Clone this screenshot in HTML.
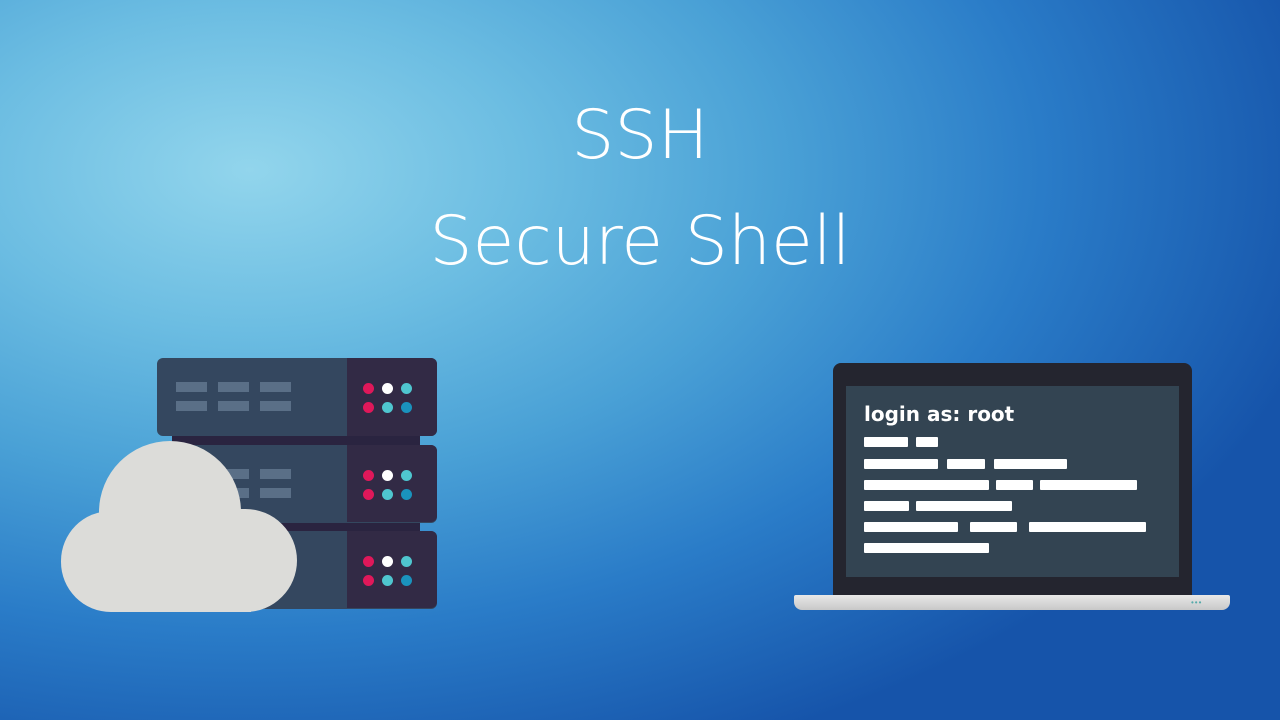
<!DOCTYPE html>
<html><head><style>
body{margin:0;width:1280px;height:720px;overflow:hidden;position:relative;font-family:"Liberation Sans",sans-serif;
background:radial-gradient(ellipse 1100px 640px at 250px 170px,#92d5ec 0%,#6cbde2 25%,#4aa1d6 48%,#2a7cc8 72%,#1654aa 100%);}
.abs{position:absolute}
.t{position:absolute;left:0;width:1280px;text-align:center;color:#fff;font-family:"DejaVu Sans",sans-serif;font-weight:200}
.u{position:absolute;left:157px;width:280px;height:78px;border-radius:6px;background:#34475f;overflow:hidden}
.g{position:absolute;width:31px;height:10px;background:#5a6f87}
.d{position:absolute;width:11px;height:11px;border-radius:50%}
.b{position:absolute;height:10px;background:#fff;border-radius:1px}
</style></head><body>
<div class="t" style="top:96px;font-size:68px">SSH</div>
<div class="t" style="top:202px;font-size:68px">Secure Shell</div>

<div class="abs" style="left:172px;top:430px;width:248px;height:110px;background:#2a2440"></div>
<div class="u" style="top:358px"></div>
<div class="u" style="top:445px"></div>
<div class="u" style="top:531px"></div>

<div class="abs" id="cloud" style="left:61px;top:441px;width:236px;height:171px">
<div class="abs" style="left:38px;top:0;width:142px;height:142px;border-radius:50%;background:#dcdcd9"></div>
<div class="abs" style="left:0;top:70px;width:110px;height:101px;border-radius:50px;background:#dcdcd9"></div>
<div class="abs" style="left:120px;top:68px;width:116px;height:103px;border-radius:52px;background:#dcdcd9"></div>
<div class="abs" style="left:50px;top:100px;width:140px;height:71px;background:#dcdcd9"></div>
</div>

<div class="abs" style="left:833px;top:363px;width:359px;height:234px;background:#24252f;border-radius:8px 8px 0 0"></div>
<div class="abs" style="left:846px;top:386px;width:333px;height:191px;background:#334452"></div>
<div class="abs" style="left:794px;top:595px;width:436px;height:15px;background:linear-gradient(#e8e8e8,#c8c8c8);border-radius:2px 2px 8px 8px"></div>
<div class="abs" style="left:1191px;top:598px;color:#5aa;font-size:8px;letter-spacing:1px">•••</div>
<div class="abs" style="left:864px;top:402px;color:#fff;font-family:'DejaVu Sans',sans-serif;font-weight:bold;font-size:20px">login as: root</div>
<div class="b" style="left:864px;top:437px;width:44px"></div><div class="b" style="left:916px;top:437px;width:22px"></div>
<div class="b" style="left:864px;top:459px;width:74px"></div><div class="b" style="left:947px;top:459px;width:38px"></div><div class="b" style="left:994px;top:459px;width:73px"></div>
<div class="b" style="left:864px;top:480px;width:125px"></div><div class="b" style="left:996px;top:480px;width:37px"></div><div class="b" style="left:1040px;top:480px;width:97px"></div>
<div class="b" style="left:864px;top:501px;width:45px"></div><div class="b" style="left:916px;top:501px;width:96px"></div>
<div class="b" style="left:864px;top:522px;width:94px"></div><div class="b" style="left:970px;top:522px;width:47px"></div><div class="b" style="left:1029px;top:522px;width:117px"></div>
<div class="b" style="left:864px;top:543px;width:125px"></div>

<script>
var s='';
[358,445,531].forEach(function(y){
 s+='<div class="abs" style="left:347px;top:'+y+'px;width:90px;height:'+(y==358?78:77)+'px;background:#322a45;border-radius:0 6px 6px 0"></div>';
 [176,218,260].forEach(function(x){s+='<div class="g" style="left:'+x+'px;top:'+(y+24)+'px"></div><div class="g" style="left:'+x+'px;top:'+(y+43)+'px"></div>';});
 var c=[['#e0185a','#ffffff','#4fc6cf'],['#e0185a','#4fc6cf','#1a93bd']];
 c.forEach(function(row,i){row.forEach(function(col,j){s+='<div class="d" style="background:'+col+';left:'+(363+j*19)+'px;top:'+(y+25+i*19)+'px"></div>';});});
});
var d=document.createElement('div');d.innerHTML=s;
var cloud=document.getElementById('cloud');
while(d.firstChild)document.body.insertBefore(d.firstChild,cloud);
</script>
</body></html>
